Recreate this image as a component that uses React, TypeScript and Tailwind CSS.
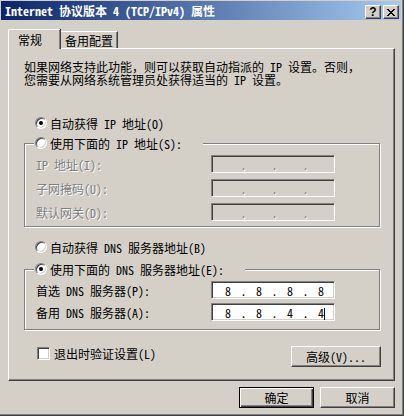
import React from "react";

// classic win2000 bevels
const raised =
  "border border-t-white border-l-white border-r-[#404040] border-b-[#404040] shadow-[inset_-1px_-1px_0_#808080]";
const sunken =
  "border border-t-[#808080] border-l-[#808080] border-r-white border-b-white shadow-[inset_1px_1px_0_#404040,inset_-1px_-1px_0_#d4d0c8]";
const dim = "text-[#808080] [text-shadow:1px_1px_0_#fff]";

function Radio({ checked }: { checked?: boolean }) {
  return (
    <span className={`w-[12px] h-[12px] rounded-full bg-white flex items-center justify-center shrink-0 ${sunken}`}>
      {checked && <span className="w-[4px] h-[4px] rounded-full bg-black" />}
    </span>
  );
}

function IpBox({ parts, disabled, caret }: { parts: string[]; disabled?: boolean; caret?: boolean }) {
  return (
    <div
      className={`relative w-[124px] h-[18px] flex items-center pl-[4px] ${sunken} ${
        disabled ? "bg-[#d4d0c8]" : "bg-white"
      }`}
    >
      {parts.map((p, i) => (
        <React.Fragment key={i}>
          {i > 0 && <span className={`w-[7px] text-center ${disabled ? dim : ""}`}>.</span>}
          <span className="w-[24px] text-center">{p}</span>
        </React.Fragment>
      ))}
      {caret && <span className="absolute left-[112px] top-[4px] w-px h-[12px] bg-black" />}
    </div>
  );
}

function Field({ label, parts, disabled, caret }: { label: string; parts: string[]; disabled?: boolean; caret?: boolean }) {
  return (
    <div className="flex items-center h-[18px] pl-[11px]">
      <span className={`w-[175px] whitespace-nowrap ${disabled ? dim : ""}`}>{label}</span>
      <IpBox parts={parts} disabled={disabled} caret={caret} />
    </div>
  );
}

export default function App() {
  const empty = ["", "", "", ""];
  return (
    <div className="w-[404px] h-[416px] bg-[#d4d0c8] border-r border-b border-[#404040] shadow-[inset_-1px_-1px_0_#808080] overflow-hidden text-[12px] leading-[13px] text-black font-['Noto_Sans_Mono_CJK_SC','Noto_Sans_CJK_SC',sans-serif]">
      {/* title bar */}
      <div className="ml-[1px] mt-[1px] w-[400px] h-[19px] flex bg-linear-to-r/srgb from-[#0a246a] to-[#a6caf0]">
        <div className="pl-[4px] h-full flex items-center text-white font-bold whitespace-nowrap">
          Internet 协议版本 4 (TCP/IPv4) 属性
        </div>
        <div className="ml-auto mt-[4px] mr-[2px] flex gap-[2px]">
          <div className={`w-[16px] h-[14px] bg-[#d4d0c8] flex items-center justify-center ${raised}`}>
            <span className="font-['Liberation_Sans',sans-serif] font-bold text-[12px] leading-none">?</span>
          </div>
          <div className={`w-[16px] h-[14px] bg-[#d4d0c8] flex items-center justify-center ${raised}`}>
            <svg width="8" height="7" viewBox="0 0 8 7" shapeRendering="crispEdges">
              <path d="M0 0h2v1H0zM6 0h2v1H6zM1 1h2v1H1zM5 1h2v1H5zM2 2h4v1H2zM3 3h2v1H3zM2 4h4v1H2zM1 5h2v1H1zM5 5h2v1H5zM0 6h2v1H0zM6 6h2v1H6z" fill="#000" />
            </svg>
          </div>
        </div>
      </div>

      {/* tabs */}
      <div className="relative z-10 flex items-end ml-[8px] mt-[9px] h-[19px]">
        <div className="h-[20px] w-[52px] mb-[-1px] pl-[9px] pt-[3px] bg-[#d4d0c8] border-l border-t border-white rounded-tl-[2px] shadow-[inset_-1px_0_0_#808080,1px_0_0_#404040] whitespace-nowrap">
          常规
        </div>
        <div className="h-[17px] w-[57px] ml-[1px] pl-[4px] pt-[2px] border-t border-white border-r border-r-[#404040] shadow-[inset_-1px_0_0_#808080] whitespace-nowrap">
          备用配置
        </div>
      </div>

      {/* panel */}
      <div className="ml-[8px] w-[387px] h-[333px] border border-t-white border-l-white border-r-[#404040] border-b-[#404040] shadow-[inset_-1px_-1px_0_#808080] pt-[12px]">
        <div className="pl-[15px] whitespace-nowrap">
          <div className="h-[13px] leading-[12px]">如果网络支持此功能，则可以获取自动指派的 IP 设置。否则，</div>
          <div className="h-[13px] leading-[12px]">您需要从网络系统管理员处获得适当的 IP 设置。</div>
        </div>

        <div className="mt-[30px] ml-[26px] h-[12px] flex items-center gap-[3px] whitespace-nowrap">
          <Radio checked />
          <span>自动获得 IP 地址(O)</span>
        </div>

        {/* static ip group */}
        <div className="mt-[14px] ml-[15px] w-[356px] border border-[#808080] shadow-[inset_1px_1px_0_#fff,1px_1px_0_#fff] pb-[5px]">
          <div className="-mt-[7px] ml-[9px] w-[169px] h-[12px] pl-[1px] bg-[#d4d0c8] flex items-center gap-[3px] whitespace-nowrap">
            <Radio />
            <span>使用下面的 IP 地址(S):</span>
          </div>
          <div className="mt-[6px] flex flex-col gap-[6px]">
            <Field label="IP 地址(I):" parts={empty} disabled />
            <Field label="子网掩码(U):" parts={empty} disabled />
            <Field label="默认网关(D):" parts={empty} disabled />
          </div>
        </div>

        <div className="mt-[14px] ml-[26px] h-[12px] flex items-center gap-[3px] whitespace-nowrap">
          <Radio />
          <span>自动获得 DNS 服务器地址(B)</span>
        </div>

        {/* dns group */}
        <div className="mt-[16px] ml-[15px] w-[356px] border border-[#808080] shadow-[inset_1px_1px_0_#fff,1px_1px_0_#fff] pb-[8px]">
          <div className="-mt-[7px] ml-[9px] w-[211px] h-[12px] pl-[1px] bg-[#d4d0c8] flex items-center gap-[3px] whitespace-nowrap">
            <Radio checked />
            <span>使用下面的 DNS 服务器地址(E):</span>
          </div>
          <div className="mt-[6px] flex flex-col gap-[4px]">
            <Field label="首选 DNS 服务器(P):" parts={["8", "8", "8", "8"]} />
            <Field label="备用 DNS 服务器(A):" parts={["8", "8", "4", "4"]} caret />
          </div>
        </div>

        <div className="mt-[16px] ml-[28px] w-[344px] flex justify-between items-start">
          <div className="mt-[1px] flex items-center gap-[4px] whitespace-nowrap">
            <span className={`w-[13px] h-[13px] bg-white ${sunken}`} />
            <span>退出时验证设置(L)</span>
          </div>
          <div className={`w-[90px] h-[21px] flex items-center justify-center whitespace-nowrap ${raised}`}>
            高级(V)...
          </div>
        </div>
      </div>

      {/* dialog buttons */}
      <div className="mt-[6px] ml-[8px] w-[387px] flex justify-end gap-[6px]">
        <div className="w-[75px] h-[21px] flex items-center justify-center border border-black shadow-[inset_1px_1px_0_#fff,inset_-1px_-1px_0_#404040,inset_-2px_-2px_0_#808080]">
          确定
        </div>
        <div className={`w-[75px] h-[21px] flex items-center justify-center ${raised}`}>取消</div>
      </div>
    </div>
  );
}
